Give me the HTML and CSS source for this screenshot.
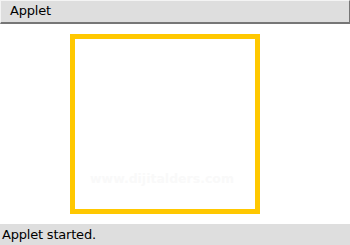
FILE: index.html
```html
<!DOCTYPE html>
<html>
<head>
<meta charset="utf-8">
<link rel="stylesheet" href="styles.css">
</head>
<body>
<div class="viewer">
  <div class="titlebar">Applet</div>
  <div class="canvas">
    <div class="square">
      <span class="watermark">www.dijitalders.com</span>
    </div>
  </div>
  <div class="status">Applet started.</div>
</div>
</body>
</html>
```
FILE: styles.css
```css
html, body {
  margin: 0;
  padding: 0;
  background: #ffffff;
}
.viewer {
  width: 350px;
  height: 245px;
  display: flex;
  flex-direction: column;
  font-family: "DejaVu Sans", sans-serif;
  font-size: 13px;
  letter-spacing: -0.2px;
  color: #000;
}
.titlebar {
  box-sizing: border-box;
  height: 24px;
  background: #dedede;
  border-top: 1px solid #f4f4f4;
  border-left: 1px solid #f4f4f4;
  border-right: 1px solid #767676;
  border-bottom: 2px solid #767676;
  padding-left: 9px;
  line-height: 20px;
}
.canvas {
  flex: 1;
  padding: 10px 0 0 70px;
}
.square {
  box-sizing: border-box;
  width: 190px;
  height: 180px;
  border: 5px solid #ffc800;
  display: flex;
  align-items: flex-end;
  justify-content: center;
  padding-bottom: 23px;
}
.watermark {
  font-family: "DejaVu Sans", sans-serif;
  font-weight: bold;
  font-size: 12.5px;
  letter-spacing: 0;
  color: #f9f9f9;
  margin-left: -6px;
}
.status {
  height: 21px;
  background: #dedede;
  padding-left: 2px;
  line-height: 21px;
}
```
